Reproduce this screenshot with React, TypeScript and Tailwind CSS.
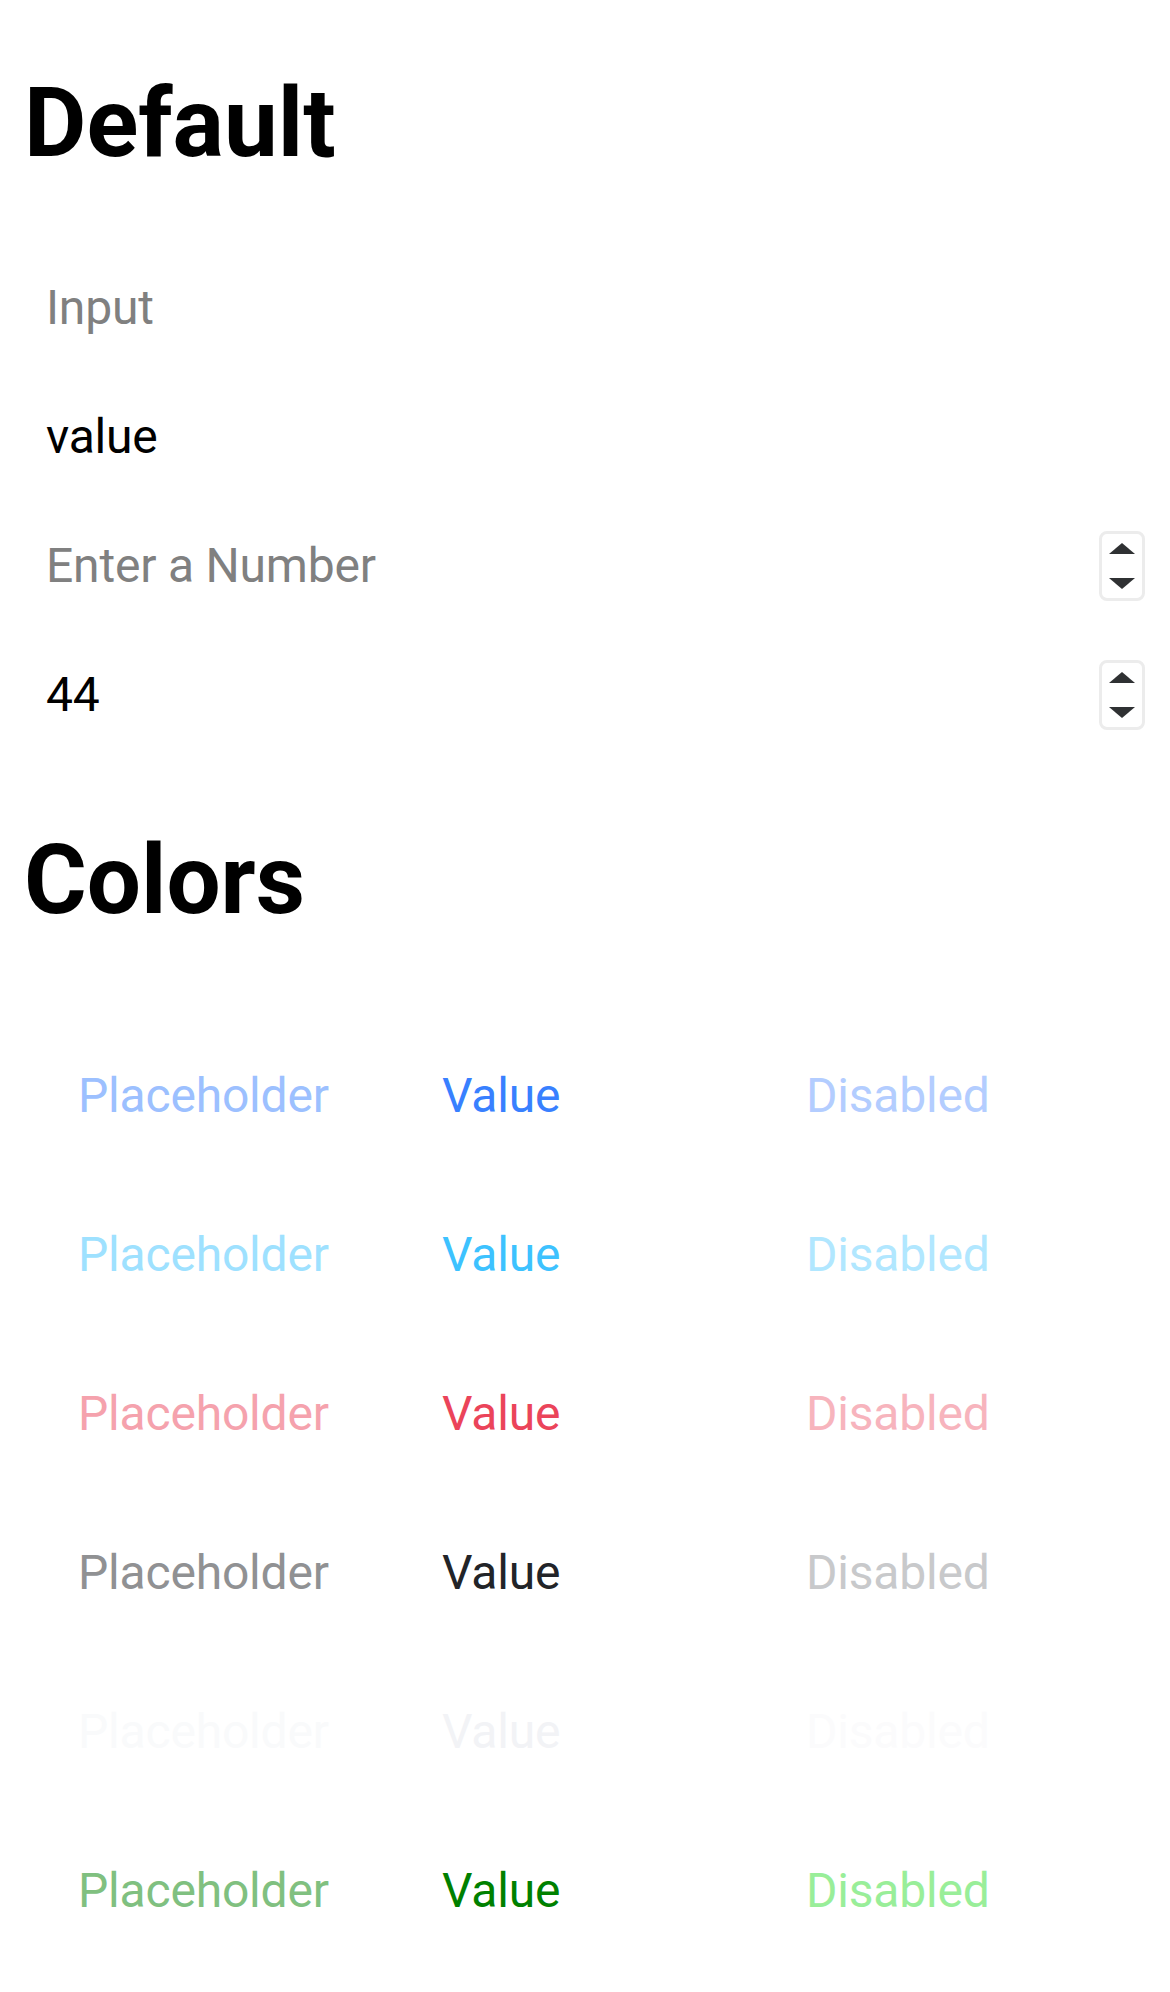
import { useState } from 'react'

interface ColorRow {
  name: string
  placeholder: string
  value: string
  disabled: string
}

const colorRows: ColorRow[] = [
  { name: 'primary', placeholder: 'text-[#9cc0ff]', value: 'text-[#3880ff]', disabled: 'text-[#b3cdff]' },
  { name: 'secondary', placeholder: 'text-[#9ee1ff]', value: 'text-[#3dc2ff]', disabled: 'text-[#b1e7ff]' },
  { name: 'danger', placeholder: 'text-[#f5a2ad]', value: 'text-[#eb445a]', disabled: 'text-[#f7b4bd]' },
  { name: 'dark', placeholder: 'text-[#909193]', value: 'text-[#222428]', disabled: 'text-[#c8c9cb]' },
  { name: 'light', placeholder: 'text-[#f9fafb]', value: 'text-[#f2f3f6]', disabled: 'text-[#fbfbfc]' },
  { name: 'custom', placeholder: 'text-[#80c080]', value: 'text-[#008000]', disabled: 'text-[#99ee99]' },
]

function Spinner({ onUp, onDown }: { onUp?: () => void; onDown?: () => void }) {
  return (
    <div className="flex h-[70px] w-[46px] flex-col items-center justify-center gap-[24px] rounded-[8px] border-[3px] border-[#ececec] bg-white">
      <svg width="26" height="11" viewBox="0 0 26 11" onClick={onUp}>
        <path d="M13 0 L26 11 L0 11 Z" fill="#2f3133" />
      </svg>
      <svg width="26" height="11" viewBox="0 0 26 11" onClick={onDown}>
        <path d="M0 0 L26 0 L13 11 Z" fill="#2f3133" />
      </svg>
    </div>
  )
}

function InputRow({ text, placeholder, number }: { text?: string; placeholder?: boolean; number?: boolean }) {
  return (
    <div className="flex h-[129px] items-center justify-between pl-[46px] pr-[25px]">
      <span className={`text-[48px] tracking-[-0.2px] ${placeholder ? 'text-[#808080]' : 'text-black'}`}>{text}</span>
      {number && <Spinner />}
    </div>
  )
}

export default function App() {
  const [num, setNum] = useState(44)

  return (
    <div className="min-h-[1992px] bg-white font-['Roboto',sans-serif] text-black">
      <h1 className="pl-[24px] pt-[66px] text-[96px] font-bold leading-[1.2]">Default</h1>

      <div className="mt-[62px]">
        <InputRow text="Input" placeholder />
        <InputRow text="value" />
        <InputRow text="Enter a Number" placeholder number />
        <div className="flex h-[129px] items-center justify-between pl-[46px] pr-[25px]">
          <span className="text-[48px] tracking-[-0.2px] text-black">{num}</span>
          <Spinner onUp={() => setNum(n => n + 1)} onDown={() => setNum(n => n - 1)} />
        </div>
      </div>

      <h1 className="mt-[64px] pl-[24px] text-[96px] font-bold leading-[1.2]">Colors</h1>

      <div className="mx-[39px] mt-[78px]">
        {colorRows.map(row => (
          <div key={row.name} className="grid h-[159px] grid-cols-3 items-center text-[48px] tracking-[-0.2px]">
            <span className={`pl-[39px] ${row.placeholder}`}>Placeholder</span>
            <span className={`pl-[39px] ${row.value}`}>Value</span>
            <span className={`pl-[39px] ${row.disabled}`}>Disabled</span>
          </div>
        ))}
      </div>
    </div>
  )
}
